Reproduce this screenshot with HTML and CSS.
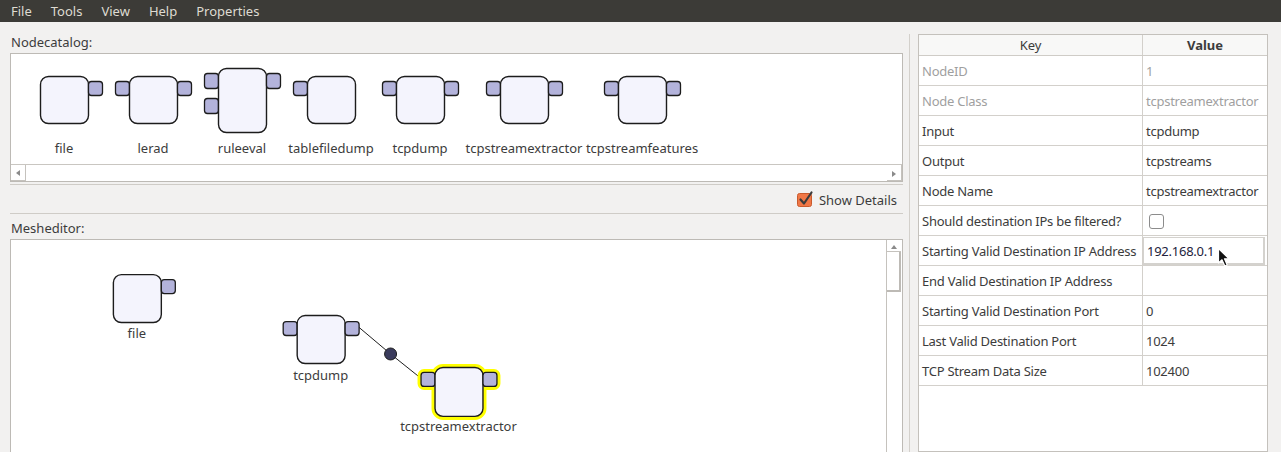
FILE: index.html
```html
<!DOCTYPE html>
<html>
<head>
<meta charset="utf-8">
<link rel="stylesheet" href="styles.css">
</head>
<body>
<div class="menubar">
  <span class="menu-item">File</span>
  <span class="menu-item">Tools</span>
  <span class="menu-item">View</span>
  <span class="menu-item">Help</span>
  <span class="menu-item">Properties</span>
</div>
<div class="main">
  <div class="left">
    <div class="section-label first">Nodecatalog:</div>
    <div class="catalog">
      <svg class="canvas catalog-canvas" viewBox="11 54 891 110" width="891" height="110">
        <g>
          <rect class="body" x="40.5" y="76.5" width="48" height="47" rx="8"/>
          <rect class="port" x="88.5" y="81.5" width="14" height="14" rx="3"/>
          <text class="lbl" x="64" y="153">file</text>
        </g>
        <g>
          <rect class="port" x="115.5" y="81.5" width="14" height="14" rx="3"/>
          <rect class="body" x="129.5" y="76.5" width="48" height="47" rx="8"/>
          <rect class="port" x="177.5" y="81.5" width="14" height="14" rx="3"/>
          <text class="lbl" x="153" y="153">lerad</text>
        </g>
        <g>
          <rect class="port" x="204.5" y="73.5" width="14" height="15" rx="3"/>
          <rect class="port" x="204.5" y="98.5" width="14" height="15" rx="3"/>
          <rect class="body" x="218.5" y="68.5" width="48" height="64" rx="8"/>
          <rect class="port" x="266.5" y="73.5" width="14" height="15" rx="3"/>
          <text class="lbl" x="242" y="153">ruleeval</text>
        </g>
        <g>
          <rect class="port" x="293.5" y="81.5" width="14" height="14" rx="3"/>
          <rect class="body" x="307.5" y="76.5" width="48" height="47" rx="8"/>
          <text class="lbl" x="331" y="153">tablefiledump</text>
        </g>
        <g>
          <rect class="port" x="382.5" y="81.5" width="14" height="14" rx="3"/>
          <rect class="body" x="396.5" y="76.5" width="48" height="47" rx="8"/>
          <rect class="port" x="444.5" y="81.5" width="14" height="14" rx="3"/>
          <text class="lbl" x="420" y="153">tcpdump</text>
        </g>
        <g>
          <rect class="port" x="486.5" y="81.5" width="14" height="14" rx="3"/>
          <rect class="body" x="500.5" y="76.5" width="48" height="47" rx="8"/>
          <rect class="port" x="548.5" y="81.5" width="14" height="14" rx="3"/>
          <text class="lbl" x="524" y="153">tcpstreamextractor</text>
        </g>
        <g>
          <rect class="port" x="604.5" y="81.5" width="14" height="14" rx="3"/>
          <rect class="body" x="618.5" y="76.5" width="48" height="47" rx="8"/>
          <rect class="port" x="666.5" y="81.5" width="14" height="14" rx="3"/>
          <text class="lbl" x="642" y="153">tcpstreamfeatures</text>
        </g>
      </svg>
      <div class="hscroll">
        <div class="arrow-btn left-btn"><span class="tri tri-left"></span></div>
        <div class="hscroll-track"></div>
        <div class="arrow-btn right-btn"><span class="tri tri-right"></span></div>
      </div>
    </div>
    <div class="details-row">
      <label class="show-details">
        <svg class="check-ico" width="18" height="18" viewBox="0 0 18 18">
          <rect x="1.5" y="3.5" width="14" height="13" rx="2" fill="#f07746" stroke="#c95a2c"/>
          <path d="M4.5 9.5 L8 13.5 L15.5 2.5" fill="none" stroke="#3b3b3b" stroke-width="2.2" stroke-linecap="round" stroke-linejoin="round"/>
        </svg>
        <span>Show Details</span>
      </label>
    </div>
    <div class="section-label">Mesheditor:</div>
    <div class="mesh">
      <svg class="canvas mesh-canvas" viewBox="11 240 876 212" width="876" height="212">
        <g>
          <rect class="body" x="113.5" y="274.5" width="48" height="48" rx="8"/>
          <rect class="port" x="161.5" y="279.5" width="14" height="14" rx="3"/>
          <text class="lbl" x="137" y="338">file</text>
        </g>
        <line class="wire" x1="359" y1="327" x2="391" y2="354"/>
        <line class="wire" x1="391" y1="354" x2="421" y2="378"/>
        <g>
          <rect class="port" x="283.5" y="321.5" width="14" height="14" rx="3"/>
          <rect class="body" x="297.5" y="315.5" width="48" height="48" rx="8"/>
          <rect class="port" x="345.5" y="321.5" width="14" height="14" rx="3"/>
          <text class="lbl" x="321" y="380">tcpdump</text>
        </g>
        <circle class="joint" cx="391" cy="354" r="6"/>
        <g>
          <rect class="hl" x="421.5" y="372.5" width="14" height="14" rx="3"/>
          <rect class="hl" x="435.5" y="367.5" width="48" height="49" rx="8"/>
          <rect class="hl" x="483.5" y="372.5" width="14" height="14" rx="3"/>
          <rect class="port" x="421.5" y="372.5" width="14" height="14" rx="3"/>
          <rect class="body" x="435.5" y="367.5" width="48" height="49" rx="8"/>
          <rect class="port" x="483.5" y="372.5" width="14" height="14" rx="3"/>
          <text class="lbl" x="459" y="431">tcpstreamextractor</text>
        </g>
      </svg>
      <div class="vscroll">
        <div class="arrow-btn up-btn"><span class="tri tri-up"></span></div>
        <div class="vthumb"></div>
      </div>
    </div>
  </div>
  <div class="right">
    <div class="dock">
      <div class="props">
        <div class="prow head">
          <div class="cell key">Key</div>
          <div class="cell val bold">Value</div>
        </div>
        <div class="prow disabled">
          <div class="cell key">NodeID</div>
          <div class="cell val">1</div>
        </div>
        <div class="prow disabled">
          <div class="cell key">Node Class</div>
          <div class="cell val">tcpstreamextractor</div>
        </div>
        <div class="prow">
          <div class="cell key">Input</div>
          <div class="cell val">tcpdump</div>
        </div>
        <div class="prow">
          <div class="cell key">Output</div>
          <div class="cell val">tcpstreams</div>
        </div>
        <div class="prow">
          <div class="cell key">Node Name</div>
          <div class="cell val">tcpstreamextractor</div>
        </div>
        <div class="prow">
          <div class="cell key">Should destination IPs be filtered?</div>
          <div class="cell val"><span class="cbox"></span></div>
        </div>
        <div class="prow">
          <div class="cell key">Starting Valid Destination IP Address</div>
          <div class="cell val editing"><div class="editor">192.168.0.1</div></div>
        </div>
        <div class="prow">
          <div class="cell key">End Valid Destination IP Address</div>
          <div class="cell val"></div>
        </div>
        <div class="prow">
          <div class="cell key">Starting Valid Destination Port</div>
          <div class="cell val">0</div>
        </div>
        <div class="prow">
          <div class="cell key">Last Valid Destination Port</div>
          <div class="cell val">1024</div>
        </div>
        <div class="prow">
          <div class="cell key">TCP Stream Data Size</div>
          <div class="cell val">102400</div>
        </div>
        <svg class="cursor" width="15" height="21" viewBox="0 0 15 21">
          <path d="M1.5 1.5 L1.5 16 L5 12.8 L7.8 19 L10.2 18 L7.5 11.8 L12 11.8 Z" fill="#111" stroke="#fff" stroke-width="1.2" stroke-linejoin="round"/>
        </svg>
      </div>
    </div>
  </div>
</div>
</body>
</html>
```

FILE: styles.css
```css
* { box-sizing: border-box; }

body {
  margin: 0;
  width: 1281px;
  height: 452px;
  overflow: hidden;
  background: #f2f1f0;
  font-family: "Noto Sans", "DejaVu Sans", sans-serif;
  font-size: 13px;
  color: #3c3c3c;
}

.menubar {
  height: 22px;
  background: #3c3b37;
  color: #dfdbd2;
  display: flex;
  align-items: center;
  padding-left: 1.5px;
  line-height: 22px;
}

.menu-item {
  padding: 0 9.5px;
}

.main {
  display: flex;
  height: 430px;
}

.left {
  width: 909px;
  flex: none;
  padding: 0 6px 0 10px;
  display: flex;
  flex-direction: column;
}

.section-label {
  height: 25px;
  padding-top: 6px;
  line-height: 16px;
  padding-left: 1px;
}

.section-label.first {
  height: 31px;
  padding-top: 12px;
}

.catalog {
  border: 1px solid #bdbab5;
  background: #fff;
  display: flex;
  flex-direction: column;
  height: 129px;
}

.canvas {
  display: block;
}

.body {
  fill: #f4f4fd;
  stroke: #1c1c1c;
  stroke-width: 1.4;
}

.port {
  fill: #b3b3db;
  stroke: #1c1c1c;
  stroke-width: 1.3;
}

.hl {
  fill: #ffff00;
  stroke: #ffff00;
  stroke-width: 7;
  stroke-linejoin: round;
}

.lbl {
  font-family: "Noto Sans", "DejaVu Sans", sans-serif;
  font-size: 13px;
  fill: #3c3c3c;
  text-anchor: middle;
}

.wire {
  stroke: #1c1c1c;
  stroke-width: 1;
}

.joint {
  fill: #3a3b5c;
  stroke: #1c1c1c;
  stroke-width: 1;
}

.hscroll {
  height: 17px;
  border-top: 1px solid #c9c6c1;
  display: flex;
  background: #fff;
}

.hscroll-track {
  flex: 1;
}

.arrow-btn {
  width: 15px;
  display: flex;
  align-items: center;
  justify-content: center;
  background: #fff;
}

.left-btn {
  border-right: 1px solid #c5c2bd;
  border-bottom: 1px solid #c5c2bd;
}

.right-btn {
  border-right: 1px solid #c5c2bd;
  border-bottom: 1px solid #c5c2bd;
  align-items: flex-end;
  padding-bottom: 3px;
}

.tri {
  width: 0;
  height: 0;
  display: block;
}

.tri-left {
  border-top: 3px solid transparent;
  border-bottom: 3px solid transparent;
  border-right: 4px solid #8a8a8a;
}

.tri-right {
  border-top: 3px solid transparent;
  border-bottom: 3px solid transparent;
  border-left: 4px solid #8a8a8a;
}

.tri-up {
  border-left: 3px solid transparent;
  border-right: 3px solid transparent;
  border-bottom: 4px solid #8a8a8a;
}

.details-row {
  margin-top: 2px;
  height: 30px;
  border-top: 1px solid #cfccc7;
  border-bottom: 1px solid #cfccc7;
  display: flex;
  justify-content: flex-end;
  align-items: center;
  padding-right: 6px;
}

.show-details {
  display: flex;
  align-items: center;
  gap: 5px;
  padding-top: 2px;
}

.check-ico {
  display: block;
  margin-top: -2px;
}

.mesh {
  flex: 1;
  border: 1px solid #bdbab5;
  border-bottom: none;
  background: #fff;
  display: flex;
}

.vscroll {
  width: 16px;
  border-left: 1px solid #c5c2bd;
  display: flex;
  flex-direction: column;
  padding-top: 2px;
}

.up-btn {
  width: 14px;
  height: 10px;
  border-bottom: 1px solid #c5c2bd;
  align-items: center;
}

.vthumb {
  width: 14px;
  height: 40px;
  border-right: 2px solid #bdbab5;
  border-bottom: 2px solid #bdbab5;
  background: #fff;
}

.right {
  flex: 1;
  padding: 12px 14px 0 0;
  display: flex;
}

.dock {
  flex: 1;
  display: flex;
  border-left: 1px solid #d3d0cb;
  padding-left: 8px;
}

.props {
  position: relative;
  width: 350px;
  height: 100%;
  background: #fff;
  border: 1px solid #c4c1bc;
  letter-spacing: -0.25px;
}

.prow {
  display: flex;
  height: 30px;
  border-bottom: 1px solid #d3d0cb;
}

.prow.head {
  height: 21px;
  background: #f8f8f7;
  border-bottom: 1px solid #cfccc7;
  letter-spacing: 0;
}

.cell {
  display: flex;
  align-items: center;
  padding-left: 3px;
  white-space: nowrap;
  overflow: hidden;
}

.cell.key {
  width: 224px;
  flex: none;
  border-right: 1px solid #d3d0cb;
}

.cell.val {
  flex: 1;
}

.head .cell {
  justify-content: center;
  padding-left: 0;
}

.bold {
  font-weight: bold;
}

.disabled .cell {
  color: #9f9f9f;
}

.cbox {
  display: block;
  width: 15px;
  height: 15px;
  margin-left: 3px;
  margin-top: 1px;
  border: 1px solid #8c8c8c;
  border-radius: 3px;
  background: #fff;
}

.cell.editing {
  padding: 1px 2px 0 0;
  align-items: stretch;
}

.editor {
  flex: 1;
  border: 1px solid #d4d2ce;
  border-right-width: 2px;
  border-bottom-width: 2px;
  display: flex;
  align-items: center;
  padding-left: 3px;
  color: #22223c;
  background: #fff;
}

.cursor {
  position: absolute;
  left: 298px;
  top: 212px;
}
```
